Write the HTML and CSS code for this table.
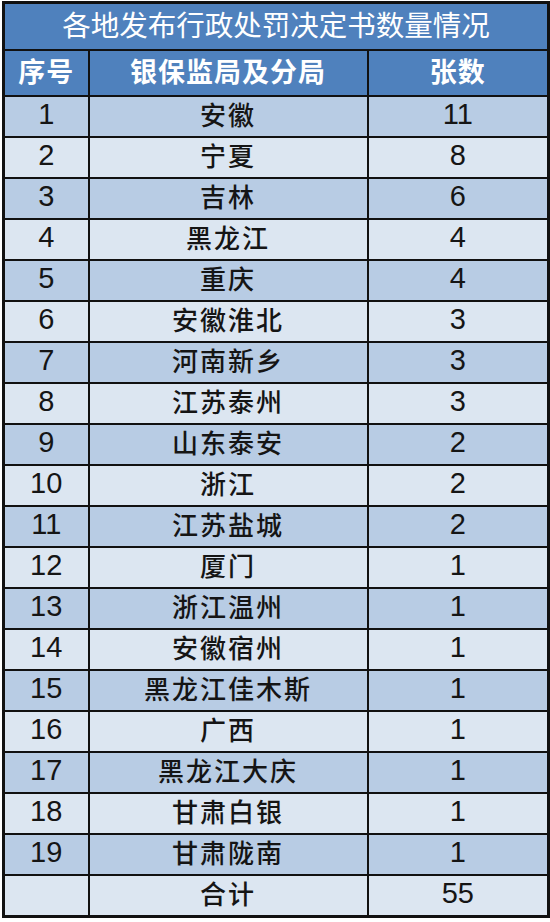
FILE: index.html
```html
<!DOCTYPE html>
<html lang="zh-CN">
<head>
<meta charset="utf-8">
<title>各地发布行政处罚决定书数量情况</title>
<link rel="stylesheet" href="styles.css">
</head>
<body>
<table class="stat">
  <colgroup>
    <col class="c-no">
    <col class="c-name">
    <col class="c-count">
  </colgroup>
  <thead>
    <tr class="title-row"><th colspan="3" class="title">各地发布行政处罚决定书数量情况</th></tr>
    <tr class="head-row"><th>序号</th><th>银保监局及分局</th><th>张数</th></tr>
  </thead>
  <tbody>
    <tr class="odd"><td class="num">1</td><td class="cn">安徽</td><td class="num">11</td></tr>
    <tr class="even"><td class="num">2</td><td class="cn">宁夏</td><td class="num">8</td></tr>
    <tr class="odd"><td class="num">3</td><td class="cn">吉林</td><td class="num">6</td></tr>
    <tr class="even"><td class="num">4</td><td class="cn">黑龙江</td><td class="num">4</td></tr>
    <tr class="odd"><td class="num">5</td><td class="cn">重庆</td><td class="num">4</td></tr>
    <tr class="even"><td class="num">6</td><td class="cn">安徽淮北</td><td class="num">3</td></tr>
    <tr class="odd"><td class="num">7</td><td class="cn">河南新乡</td><td class="num">3</td></tr>
    <tr class="even"><td class="num">8</td><td class="cn">江苏泰州</td><td class="num">3</td></tr>
    <tr class="odd"><td class="num">9</td><td class="cn">山东泰安</td><td class="num">2</td></tr>
    <tr class="even"><td class="num">10</td><td class="cn">浙江</td><td class="num">2</td></tr>
    <tr class="odd"><td class="num">11</td><td class="cn">江苏盐城</td><td class="num">2</td></tr>
    <tr class="even"><td class="num">12</td><td class="cn">厦门</td><td class="num">1</td></tr>
    <tr class="odd"><td class="num">13</td><td class="cn">浙江温州</td><td class="num">1</td></tr>
    <tr class="even"><td class="num">14</td><td class="cn">安徽宿州</td><td class="num">1</td></tr>
    <tr class="odd"><td class="num">15</td><td class="cn">黑龙江佳木斯</td><td class="num">1</td></tr>
    <tr class="even"><td class="num">16</td><td class="cn">广西</td><td class="num">1</td></tr>
    <tr class="odd"><td class="num">17</td><td class="cn">黑龙江大庆</td><td class="num">1</td></tr>
    <tr class="even"><td class="num">18</td><td class="cn">甘肃白银</td><td class="num">1</td></tr>
    <tr class="odd"><td class="num">19</td><td class="cn">甘肃陇南</td><td class="num">1</td></tr>
    <tr class="even total"><td class="num"></td><td class="cn">合计</td><td class="num">55</td></tr>
  </tbody>
</table>
</body>
</html>
```

FILE: styles.css
```css
html, body {
  margin: 0;
  padding: 0;
  background: #ffffff;
}

body {
  padding: 1px 0 0 2px;
  font-family: "Noto Sans CJK SC", "Liberation Sans", sans-serif;
}

.stat {
  border-collapse: collapse;
  table-layout: fixed;
  width: 545px;
  border: 3px solid #111;
}

.c-no { width: 85px; }
.c-name { width: 279px; }
.c-count { width: 181px; }

.stat th,
.stat td {
  border: 2px solid #111;
  padding: 0 0 5px 0;
  text-align: center;
  vertical-align: middle;
  line-height: 1;
  overflow: hidden;
  white-space: nowrap;
}

.title-row th {
  height: 40px;
}

.title {
  background: #4f81bd;
  color: #ffffff;
  font-weight: 400;
  font-size: 28.5px;
  letter-spacing: 0;
}

.head-row th {
  height: 39px;
  background: #4f81bd;
  color: #ffffff;
  font-weight: 700;
  font-size: 27px;
  letter-spacing: 1px;
}

.stat td {
  height: 34px;
  color: #151515;
}

.odd td { background: #b8cce4; }
.even td { background: #dce6f1; }

.num {
  font-family: "Liberation Sans", Arial, sans-serif;
  font-size: 29px;
}

.cn {
  font-family: "Noto Sans CJK SC", sans-serif;
  font-size: 26px;
  font-weight: 500;
  letter-spacing: 2px;
}
```
